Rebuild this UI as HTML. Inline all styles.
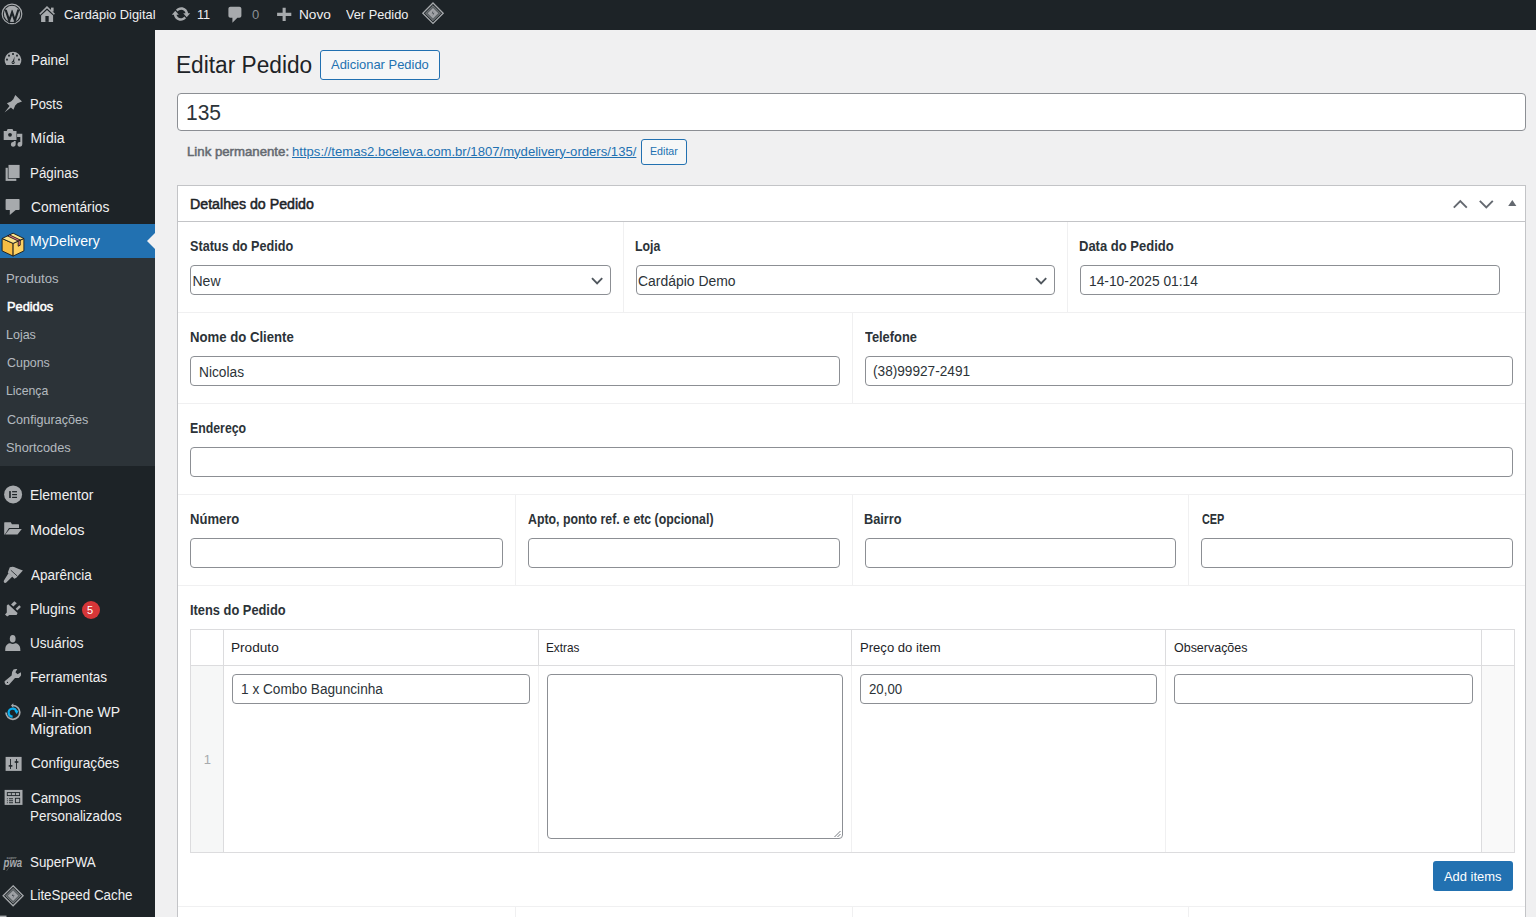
<!DOCTYPE html>
<html><head><meta charset="utf-8"><title>Editar Pedido</title>
<style>
html,body{margin:0;padding:0}
body{width:1536px;height:917px;overflow:hidden;position:relative;background:#f0f0f1;font-family:"Liberation Sans",sans-serif}
.t{position:absolute;white-space:nowrap;transform-origin:0 0}
.r{position:absolute}
svg{position:absolute}
</style></head><body>
<div class="r" style="left:0px;top:0px;width:1536px;height:30px;background:#1d2327"></div>
<div class="r" style="left:0px;top:30px;width:155px;height:887px;background:#1d2327"></div>
<div class="r" style="left:0px;top:258px;width:155px;height:208px;background:#2c3338"></div>
<div class="r" style="left:0px;top:224px;width:155px;height:34px;background:#2271b1"></div>
<div class="r" style="left:147px;top:233px;width:0;height:0;border-top:8px solid transparent;border-bottom:8px solid transparent;border-right:8px solid #f0f0f1"></div>
<div class="r" style="left:81.5px;top:600.5px;width:18px;height:18px;border-radius:9px;background:#d63638"></div>
<div class="r" style="left:320px;top:50px;width:120px;height:30px;border:1px solid #2271b1;border-radius:3px;background:#f6f7f7;box-sizing:border-box"></div>
<div class="r" style="left:177px;top:93px;width:1349px;height:38px;border:1px solid #8c8f94;border-radius:4px;background:#fff;box-sizing:border-box"></div>
<div class="r" style="left:641px;top:139px;width:46px;height:26px;border:1px solid #2271b1;border-radius:3px;background:#f6f7f7;box-sizing:border-box"></div>
<div class="r" style="left:177px;top:185px;width:1349px;height:732px;border:1px solid #c3c4c7;border-bottom:none;background:#fff;box-sizing:border-box"></div>
<div class="r" style="left:178px;top:221px;width:1347px;height:1px;background:#c3c4c7"></div>
<div class="r" style="left:178px;top:312px;width:1347px;height:1px;background:#f0f0f1"></div>
<div class="r" style="left:178px;top:403px;width:1347px;height:1px;background:#f0f0f1"></div>
<div class="r" style="left:178px;top:494px;width:1347px;height:1px;background:#f0f0f1"></div>
<div class="r" style="left:178px;top:585px;width:1347px;height:1px;background:#f0f0f1"></div>
<div class="r" style="left:178px;top:906px;width:1347px;height:1px;background:#f0f0f1"></div>
<div class="r" style="left:623px;top:222px;width:1px;height:90px;background:#f0f0f1"></div>
<div class="r" style="left:1067px;top:222px;width:1px;height:90px;background:#f0f0f1"></div>
<div class="r" style="left:852px;top:313px;width:1px;height:90px;background:#f0f0f1"></div>
<div class="r" style="left:515px;top:495px;width:1px;height:90px;background:#f0f0f1"></div>
<div class="r" style="left:515px;top:907px;width:1px;height:10px;background:#f0f0f1"></div>
<div class="r" style="left:852px;top:495px;width:1px;height:90px;background:#f0f0f1"></div>
<div class="r" style="left:852px;top:907px;width:1px;height:10px;background:#f0f0f1"></div>
<div class="r" style="left:1188px;top:495px;width:1px;height:90px;background:#f0f0f1"></div>
<div class="r" style="left:1188px;top:907px;width:1px;height:10px;background:#f0f0f1"></div>
<div class="r" style="left:190px;top:265px;width:421px;height:30px;border:1px solid #8c8f94;border-radius:4px;background:#fff;box-sizing:border-box"></div>
<div class="r" style="left:636px;top:265px;width:419px;height:30px;border:1px solid #8c8f94;border-radius:4px;background:#fff;box-sizing:border-box"></div>
<div class="r" style="left:1080px;top:265px;width:420px;height:30px;border:1px solid #8c8f94;border-radius:4px;background:#fff;box-sizing:border-box"></div>
<div class="r" style="left:190px;top:356px;width:650px;height:30px;border:1px solid #8c8f94;border-radius:4px;background:#fff;box-sizing:border-box"></div>
<div class="r" style="left:865px;top:356px;width:648px;height:30px;border:1px solid #8c8f94;border-radius:4px;background:#fff;box-sizing:border-box"></div>
<div class="r" style="left:190px;top:447px;width:1323px;height:30px;border:1px solid #8c8f94;border-radius:4px;background:#fff;box-sizing:border-box"></div>
<div class="r" style="left:190px;top:538px;width:313px;height:30px;border:1px solid #8c8f94;border-radius:4px;background:#fff;box-sizing:border-box"></div>
<div class="r" style="left:528px;top:538px;width:312px;height:30px;border:1px solid #8c8f94;border-radius:4px;background:#fff;box-sizing:border-box"></div>
<div class="r" style="left:865px;top:538px;width:311px;height:30px;border:1px solid #8c8f94;border-radius:4px;background:#fff;box-sizing:border-box"></div>
<div class="r" style="left:1201px;top:538px;width:312px;height:30px;border:1px solid #8c8f94;border-radius:4px;background:#fff;box-sizing:border-box"></div>
<div class="r" style="left:190px;top:629px;width:1325px;height:224px;border:1px solid #dcdcde;box-sizing:border-box;background:#fff"></div>
<div class="r" style="left:191px;top:666px;width:32px;height:186px;background:#f6f7f7"></div>
<div class="r" style="left:1482px;top:666px;width:32px;height:186px;background:#f9f9f9"></div>
<div class="r" style="left:191px;top:665px;width:1323px;height:1px;background:#dcdcde"></div>
<div class="r" style="left:223px;top:630px;width:1px;height:35px;background:#dcdcde"></div>
<div class="r" style="left:223px;top:666px;width:1px;height:186px;background:#dcdcde"></div>
<div class="r" style="left:538px;top:630px;width:1px;height:35px;background:#dcdcde"></div>
<div class="r" style="left:538px;top:666px;width:1px;height:186px;background:#f0f0f1"></div>
<div class="r" style="left:851px;top:630px;width:1px;height:35px;background:#dcdcde"></div>
<div class="r" style="left:851px;top:666px;width:1px;height:186px;background:#f0f0f1"></div>
<div class="r" style="left:1165px;top:630px;width:1px;height:35px;background:#dcdcde"></div>
<div class="r" style="left:1165px;top:666px;width:1px;height:186px;background:#f0f0f1"></div>
<div class="r" style="left:1481px;top:630px;width:1px;height:35px;background:#dcdcde"></div>
<div class="r" style="left:1481px;top:666px;width:1px;height:186px;background:#dcdcde"></div>
<div class="r" style="left:232px;top:674px;width:298px;height:30px;border:1px solid #8c8f94;border-radius:4px;background:#fff;box-sizing:border-box"></div>
<div class="r" style="left:547px;top:674px;width:296px;height:165px;border:1px solid #8c8f94;border-radius:4px;background:#fff;box-sizing:border-box"></div>
<div class="r" style="left:860px;top:674px;width:297px;height:30px;border:1px solid #8c8f94;border-radius:4px;background:#fff;box-sizing:border-box"></div>
<div class="r" style="left:1174px;top:674px;width:299px;height:30px;border:1px solid #8c8f94;border-radius:4px;background:#fff;box-sizing:border-box"></div>
<div class="r" style="left:1433px;top:861px;width:80px;height:30px;background:#2271b1;border-radius:3px"></div>
<div class="t" style="left:63.70px;top:7.75px;font-size:13px;line-height:13px;color:#f0f0f1;font-weight:normal;transform:scaleX(0.9891);">Cardápio Digital</div>
<div class="t" style="left:196.72px;top:7.75px;font-size:13px;line-height:13px;color:#f0f0f1;font-weight:normal;transform:scaleX(0.9750);">11</div>
<div class="t" style="left:252.00px;top:7.75px;font-size:13px;line-height:13px;color:#8c8f94;font-weight:normal;">0</div>
<div class="t" style="left:299.45px;top:7.75px;font-size:13px;line-height:13px;color:#f0f0f1;font-weight:normal;transform:scaleX(1.0517);">Novo</div>
<div class="t" style="left:345.80px;top:7.75px;font-size:13px;line-height:13px;color:#f0f0f1;font-weight:normal;transform:scaleX(0.9794);">Ver Pedido</div>
<div class="t" style="left:30.74px;top:52.75px;font-size:14px;line-height:14px;color:#f0f0f1;font-weight:normal;transform:scaleX(0.9649);">Painel</div>
<div class="t" style="left:30.47px;top:97.35px;font-size:14px;line-height:14px;color:#f0f0f1;font-weight:normal;transform:scaleX(0.9265);">Posts</div>
<div class="t" style="left:30.40px;top:131.25px;font-size:14px;line-height:14px;color:#f0f0f1;font-weight:normal;">Mídia</div>
<div class="t" style="left:30.44px;top:165.65px;font-size:14px;line-height:14px;color:#f0f0f1;font-weight:normal;transform:scaleX(0.9551);">Páginas</div>
<div class="t" style="left:31.40px;top:200.05px;font-size:14px;line-height:14px;color:#f0f0f1;font-weight:normal;transform:scaleX(0.9873);">Comentários</div>
<div class="t" style="left:30.39px;top:234.05px;font-size:14px;line-height:14px;color:#ffffff;font-weight:normal;transform:scaleX(1.0088);">MyDelivery</div>
<div class="t" style="left:6.39px;top:272.00px;font-size:13px;line-height:13px;color:rgba(240,246,252,.7);font-weight:normal;transform:scaleX(1.0098);">Produtos</div>
<div class="t" style="left:7.40px;top:300.10px;font-size:13px;line-height:13px;color:#ffffff;font-weight:normal;-webkit-text-stroke:0.5px currentColor;transform:scaleX(0.9830);">Pedidos</div>
<div class="t" style="left:6.44px;top:328.20px;font-size:13px;line-height:13px;color:rgba(240,246,252,.7);font-weight:normal;transform:scaleX(0.9600);">Lojas</div>
<div class="t" style="left:7.40px;top:356.30px;font-size:13px;line-height:13px;color:rgba(240,246,252,.7);font-weight:normal;transform:scaleX(0.9556);">Cupons</div>
<div class="t" style="left:6.46px;top:384.40px;font-size:13px;line-height:13px;color:rgba(240,246,252,.7);font-weight:normal;transform:scaleX(0.9432);">Licença</div>
<div class="t" style="left:7.40px;top:412.50px;font-size:13px;line-height:13px;color:rgba(240,246,252,.7);font-weight:normal;transform:scaleX(0.9702);">Configurações</div>
<div class="t" style="left:6.42px;top:440.60px;font-size:13px;line-height:13px;color:rgba(240,246,252,.7);font-weight:normal;transform:scaleX(0.9831);">Shortcodes</div>
<div class="t" style="left:30.41px;top:488.15px;font-size:14px;line-height:14px;color:#f0f0f1;font-weight:normal;transform:scaleX(0.9921);">Elementor</div>
<div class="t" style="left:30.37px;top:522.75px;font-size:14px;line-height:14px;color:#f0f0f1;font-weight:normal;transform:scaleX(1.0308);">Modelos</div>
<div class="t" style="left:31.40px;top:568.15px;font-size:14px;line-height:14px;color:#f0f0f1;font-weight:normal;transform:scaleX(0.9651);">Aparência</div>
<div class="t" style="left:30.41px;top:601.95px;font-size:14px;line-height:14px;color:#f0f0f1;font-weight:normal;transform:scaleX(0.9889);">Plugins</div>
<div class="t" style="left:30.43px;top:636.15px;font-size:14px;line-height:14px;color:#f0f0f1;font-weight:normal;transform:scaleX(0.9704);">Usuários</div>
<div class="t" style="left:30.43px;top:670.15px;font-size:14px;line-height:14px;color:#f0f0f1;font-weight:normal;transform:scaleX(0.9705);">Ferramentas</div>
<div class="t" style="left:31.40px;top:704.95px;font-size:14px;line-height:14px;color:#f0f0f1;font-weight:normal;">All-in-One WP</div>
<div class="t" style="left:30.33px;top:722.35px;font-size:14px;line-height:14px;color:#f0f0f1;font-weight:normal;transform:scaleX(1.0714);">Migration</div>
<div class="t" style="left:31.40px;top:756.15px;font-size:14px;line-height:14px;color:#f0f0f1;font-weight:normal;transform:scaleX(0.9767);">Configurações</div>
<div class="t" style="left:31.40px;top:790.85px;font-size:14px;line-height:14px;color:#f0f0f1;font-weight:normal;transform:scaleX(0.9558);">Campos</div>
<div class="t" style="left:30.44px;top:808.55px;font-size:14px;line-height:14px;color:#f0f0f1;font-weight:normal;transform:scaleX(0.9568);">Personalizados</div>
<div class="t" style="left:30.44px;top:854.55px;font-size:14px;line-height:14px;color:#f0f0f1;font-weight:normal;transform:scaleX(0.9559);">SuperPWA</div>
<div class="t" style="left:30.45px;top:888.45px;font-size:14px;line-height:14px;color:#f0f0f1;font-weight:normal;transform:scaleX(0.9547);">LiteSpeed Cache</div>
<div class="t" style="left:86.90px;top:604.69px;font-size:11px;line-height:11px;color:#ffffff;font-weight:normal;">5</div>
<div class="t" style="left:176.23px;top:53.93px;font-size:23px;line-height:23px;color:#1d2327;font-weight:normal;transform:scaleX(0.9859);">Editar Pedido</div>
<div class="t" style="left:331.30px;top:58.20px;font-size:13px;line-height:13px;color:#2271b1;font-weight:normal;transform:scaleX(0.9949);">Adicionar Pedido</div>
<div class="t" style="left:186.35px;top:101.98px;font-size:22px;line-height:22px;color:#2c3338;font-weight:normal;transform:scaleX(0.9543);">135</div>
<div class="t" style="left:187.40px;top:144.70px;font-size:13px;line-height:13px;color:#646970;font-weight:normal;-webkit-text-stroke:0.5px currentColor;transform:scaleX(1.0160);">Link permanente:</div>
<div class="t" style="left:292.39px;top:144.70px;font-size:13px;line-height:13px;color:#2271b1;font-weight:normal;transform:scaleX(1.0076);text-decoration:underline">https://temas2.bceleva.com.br/1807/mydelivery-orders/135/</div>
<div class="t" style="left:649.53px;top:146.19px;font-size:11px;line-height:11px;color:#2271b1;font-weight:normal;transform:scaleX(0.9679);">Editar</div>
<div class="t" style="left:189.69px;top:197.05px;font-size:14px;line-height:14px;color:#1d2327;font-weight:normal;-webkit-text-stroke:0.5px currentColor;transform:scaleX(1.0140);">Detalhes do Pedido</div>
<div class="t" style="left:190.00px;top:239.15px;font-size:14px;line-height:14px;color:#2c3338;font-weight:bold;transform:scaleX(0.9026);">Status do Pedido</div>
<div class="t" style="left:634.92px;top:239.15px;font-size:14px;line-height:14px;color:#2c3338;font-weight:bold;transform:scaleX(0.8786);">Loja</div>
<div class="t" style="left:1079.47px;top:239.15px;font-size:14px;line-height:14px;color:#2c3338;font-weight:bold;transform:scaleX(0.9287);">Data do Pedido</div>
<div class="t" style="left:192.50px;top:274.15px;font-size:14px;line-height:14px;color:#2c3338;font-weight:normal;">New</div>
<div class="t" style="left:637.90px;top:274.35px;font-size:14px;line-height:14px;color:#2c3338;font-weight:normal;transform:scaleX(0.9949);">Cardápio Demo</div>
<div class="t" style="left:1088.61px;top:273.55px;font-size:14px;line-height:14px;color:#2c3338;font-weight:normal;transform:scaleX(0.9855);">14-10-2025 01:14</div>
<div class="t" style="left:189.66px;top:330.15px;font-size:14px;line-height:14px;color:#2c3338;font-weight:bold;transform:scaleX(0.9394);">Nome do Cliente</div>
<div class="t" style="left:865.00px;top:330.15px;font-size:14px;line-height:14px;color:#2c3338;font-weight:bold;transform:scaleX(0.9179);">Telefone</div>
<div class="t" style="left:198.72px;top:364.85px;font-size:14px;line-height:14px;color:#2c3338;font-weight:normal;transform:scaleX(0.9800);">Nicolas</div>
<div class="t" style="left:872.83px;top:364.45px;font-size:14px;line-height:14px;color:#2c3338;font-weight:normal;transform:scaleX(0.9745);">(38)99927-2491</div>
<div class="t" style="left:189.72px;top:421.35px;font-size:14px;line-height:14px;color:#2c3338;font-weight:bold;transform:scaleX(0.8794);">Endereço</div>
<div class="t" style="left:189.97px;top:512.15px;font-size:14px;line-height:14px;color:#2c3338;font-weight:bold;transform:scaleX(0.9327);">Número</div>
<div class="t" style="left:528.20px;top:512.15px;font-size:14px;line-height:14px;color:#2c3338;font-weight:bold;transform:scaleX(0.8800);">Apto, ponto ref. e etc (opcional)</div>
<div class="t" style="left:864.19px;top:512.15px;font-size:14px;line-height:14px;color:#2c3338;font-weight:bold;transform:scaleX(0.9100);">Bairro</div>
<div class="t" style="left:1201.70px;top:512.15px;font-size:14px;line-height:14px;color:#2c3338;font-weight:bold;transform:scaleX(0.7759);">CEP</div>
<div class="t" style="left:189.58px;top:602.65px;font-size:14px;line-height:14px;color:#2c3338;font-weight:bold;transform:scaleX(0.9175);">Itens do Pedido</div>
<div class="t" style="left:231.25px;top:640.70px;font-size:13px;line-height:13px;color:#1d2327;font-weight:normal;transform:scaleX(1.0477);">Produto</div>
<div class="t" style="left:546.19px;top:640.70px;font-size:13px;line-height:13px;color:#1d2327;font-weight:normal;transform:scaleX(0.9056);">Extras</div>
<div class="t" style="left:859.69px;top:640.70px;font-size:13px;line-height:13px;color:#1d2327;font-weight:normal;transform:scaleX(1.0063);">Preço do item</div>
<div class="t" style="left:1174.00px;top:640.70px;font-size:13px;line-height:13px;color:#1d2327;font-weight:normal;transform:scaleX(0.9592);">Observações</div>
<div class="t" style="left:203.70px;top:753.00px;font-size:13px;line-height:13px;color:#a7aaad;font-weight:normal;">1</div>
<div class="t" style="left:240.92px;top:682.15px;font-size:14px;line-height:14px;color:#2c3338;font-weight:normal;transform:scaleX(0.9752);">1 x Combo Baguncinha</div>
<div class="t" style="left:869.30px;top:682.15px;font-size:14px;line-height:14px;color:#2c3338;font-weight:normal;transform:scaleX(0.9457);">20,00</div>
<div class="t" style="left:1444.40px;top:870.00px;font-size:13px;line-height:13px;color:#ffffff;font-weight:normal;transform:scaleX(0.9931);">Add items</div>
<svg width="1536" height="917" viewBox="0 0 1536 917" style="position:absolute;left:0;top:0;pointer-events:none"><circle cx="12" cy="13.9" r="9.8" fill="none" stroke="#a7aaad" stroke-width="1.2"/><circle cx="12" cy="13.9" r="8.1" fill="#a7aaad"/><path d="M5.6,9.6 L9.2,20.6 L12.1,12.2 L14.9,20.6 L18.4,9.6" fill="none" stroke="#1d2327" stroke-width="2.1" stroke-linejoin="miter"/><path d="M6.2,9.2 H10.3 M11.6,9.2 H15.2" stroke="#a7aaad" stroke-width="1.2"/><path d="M39.8,14.3 L47,7.1 L54.4,14.3" fill="none" stroke="#a7aaad" stroke-width="1.6"/><rect x="51" y="7.6" width="2.6" height="4" fill="#a7aaad"/><path d="M41.1,21.9 V15.6 L47,9.9 L53.1,15.6 V21.9 Z" fill="#a7aaad"/><rect x="45.4" y="16" width="3.3" height="5.9" fill="#1d2327"/><g transform="translate(171,4)"><path fill="#a7aaad" d="M10.2 3.28c3.53 0 6.43 2.61 6.92 6h2.08l-3.5 4-3.5-4h2.32c-.45-1.97-2.21-3.45-4.32-3.45-1.45 0-2.73.71-3.540 1.78L4.95 5.66C6.23 4.2 8.11 3.28 10.2 3.28zm-.4 13.44c-3.52 0-6.43-2.61-6.920-6H.8l3.5-4c1.17 1.33 2.33 2.670 3.5 4H5.48c.45 1.97 2.21 3.45 4.32 3.45 1.45 0 2.73-.71 3.54-1.78l1.71 1.950c-1.28 1.46-3.15 2.38-5.25 2.38z"/></g><g transform="translate(225.4,4.8)"><path fill="#a7aaad" d="M5 2h9c1.1 0 2 .9 2 2v7c0 1.1-.9 2-2 2h-2l-5 5v-5H5c-1.1 0-2-.9-2-2V4c0-1.1.9-2 2-2z"/></g><path fill="#a7aaad" d="M282.6,7.7 h3.1 v5.1 h5.6 v3.1 h-5.6 v5.1 h-3.1 v-5.1 h-5.5 v-3.1 h5.5 z"/><polygon points="433,3.0 443.2,13.2 433,23.4 422.8,13.2" fill="none" stroke="#a7aaad" stroke-width="1.3"/><polygon points="433,5.652 440.548,13.2 433,20.747999999999998 425.452,13.2" fill="#a7aaad" fill-opacity="0.45" stroke="#a7aaad" stroke-width="0.8" stroke-opacity="0.7"/><polygon points="433,7.896 438.304,13.2 433,18.503999999999998 427.696,13.2" fill="#a7aaad" opacity="0.9"/><path d="M433.3,10.6 L431.7,13.5 L433.4,13.299999999999999 L432.5,15.899999999999999 L434.4,12.7 L432.8,12.899999999999999 Z" fill="#3c434a"/><path d="M6.2,65.1 A8.4,8.4 0 1 1 19.8,65.1 Z" fill="#a7aaad"/><rect x="12.1" y="53.1" width="1.8" height="1.8" fill="#1d2327"/><rect x="8.1" y="54.7" width="1.8" height="1.8" fill="#1d2327"/><rect x="16.1" y="54.7" width="1.8" height="1.8" fill="#1d2327"/><rect x="6.1" y="58.7" width="1.8" height="1.8" fill="#1d2327"/><rect x="18.1" y="58.7" width="1.8" height="1.8" fill="#1d2327"/><path d="M12.2,62.4 L14.6,56.6 L14,62.6 Z" fill="#1d2327"/><circle cx="13.1" cy="62.4" r="1.5" fill="#1d2327"/><circle cx="13.1" cy="62.4" r="0.6" fill="#a7aaad"/><path fill="#a7aaad" d="M15.3,94.9 L22,101.5 L17.4,103.3 L15.2,105.6 L13.4,109.8 L10.9,107.5 L4.5,112.6 L9.5,106.1 L6.9,103.2 L11,101.4 L13.3,99.3 Z"/><path fill="#a7aaad" d="M3.7,131 H6.7 L7.6,129 H12.5 L13.4,131 H16.5 V139.9 H3.7 Z"/><circle cx="10" cy="134.8" r="1.9" fill="#1d2327"/><path fill="#a7aaad" d="M17.1,133.8 H22.3 V144.3 A2.4,2.4 0 1 1 20.3,142 V137 H17.1 Z"/><path fill="#a7aaad" d="M13.7,140.9 H15.7 V144.3 A2.4,2.4 0 1 1 13.7,142 Z"/><rect x="5.6" y="167.8" width="10.7" height="13.1" fill="#a7aaad"/><rect x="7.8" y="164.2" width="12.4" height="14.5" fill="#1d2327"/><rect x="8.5" y="164.9" width="11.1" height="13.1" fill="#a7aaad"/><path fill="#a7aaad" d="M6.4,198.9 H18.8 Q19.6,198.9 19.6,199.7 V209.2 Q19.6,210 18.8,210 H15.7 L9.8,214.9 V210 H6.4 Q5.6,210 5.6,209.2 V199.7 Q5.6,198.9 6.4,198.9 Z"/><g stroke="#1a1a1a" stroke-width="0.9" stroke-linejoin="round"><polygon points="2.1,238.5 13.1,243.4 13.1,256.1 2.1,250.9" fill="#f7bd45"/><polygon points="13.1,243.4 23.9,238.5 23.9,250.9 13.1,256.1" fill="#fbd062"/><polygon points="2.1,238.5 13.1,233.2 23.9,238.5 13.1,243.4" fill="#fde48a"/><polygon points="7.6,235.9 9.6,234.9 20.2,240 18.2,241" fill="#f27b88"/><polygon points="18.2,241 20.2,240 20.2,245.2 18.2,246.2" fill="#f27b88"/></g><circle cx="13.1" cy="494.4" r="9" fill="#a7aaad"/><rect x="9.2" y="491.1" width="1.6" height="6.9" fill="#1d2327"/><rect x="12.1" y="491.1" width="4.9" height="1.2" fill="#1d2327"/><rect x="12.1" y="494" width="4.9" height="1.2" fill="#1d2327"/><rect x="12.1" y="496.8" width="4.9" height="1.2" fill="#1d2327"/><path fill="#a7aaad" d="M4.2,534.6 V522.8 Q4.2,522.2 4.8,522.2 H10.8 L11.9,524.3 H18.4 Q19,524.3 19,524.9 V528 H9 L4.8,534.6 Z"/><path fill="#a7aaad" d="M5.2,534.6 L9.6,529 H21.8 L17.5,534.6 Z"/><path fill="#a7aaad" d="M9.8,567.3 Q12,566.5 14,566.9 Q18,568.5 22.9,570.5 L16.3,577.7 L14.4,578.7 L7.8,572.5 Z"/><path d="M10.8,570.2 L17.3,576.1" stroke="#1d2327" stroke-width="0.8"/><path fill="#a7aaad" d="M8.6,572.9 L12.4,576.6 L6.3,582.6 Q5.2,583.5 4.2,582.5 Q3.2,581.4 4.1,580.3 Z"/><path fill="#a7aaad" d="M8.2,604.3 L17.6,613.1 L16.6,614.9 L9.4,614.9 L7.2,616.6 L5,614.6 L6.8,612.6 L6.8,605.4 Z"/><path fill="#a7aaad" d="M11,604.6 L14.3,601.2 L16.8,603.2 L13.4,606.6 Z"/><path fill="#a7aaad" d="M15.7,608.8 L19.3,605.2 L20.9,606.9 L17.3,610.5 Z"/><ellipse cx="12.7" cy="638.7" rx="2.9" ry="3.8" fill="#a7aaad"/><path fill="#a7aaad" d="M5.2,650.9 Q4.8,645.5 8.5,643.6 Q9.5,643.1 10.2,643.3 Q12.7,644.8 15.2,643.3 Q16,643.1 17,643.6 Q20.7,645.5 20.4,650.9 Z"/><path fill="#a7aaad" d="M13.5,669.5 Q14.8,668.6 17.3,669 L15.4,672.2 L17.6,674.3 L20.9,672.2 Q21.3,675 20.7,676 L18.8,677.9 L15,678.1 L9.2,684.4 Q7.5,685.5 5.6,684.4 Q4.3,683 4.6,681.3 L11.6,675.5 L12.1,671.9 Z"/><circle cx="7.5" cy="682.4" r="0.6" fill="#1d2327"/><path d="M6,712.6 A6.9,6.9 0 1 0 12.9,705.5" fill="none" stroke="#a7aaad" stroke-width="1.7"/><path fill="#a7aaad" d="M11,705.6 L13.3,703.2 L13.3,708 Z"/><path d="M12.6,716.6 A4,4 0 1 1 16.4,711.2" fill="none" stroke="#0aaeef" stroke-width="2.2"/><path fill="#0aaeef" d="M14.6,711 L18.6,710.6 L16.8,714.2 Z"/><rect x="5.6" y="756.9" width="16" height="14" fill="#a7aaad"/><rect x="10.1" y="759" width="0.9" height="10" fill="#1d2327"/><rect x="8.7" y="765.1" width="3.7" height="1.6" fill="#1d2327"/><rect x="16.1" y="759" width="0.9" height="10" fill="#1d2327"/><rect x="14.7" y="761.2" width="3.7" height="1.6" fill="#1d2327"/><rect x="4.6" y="789.9" width="17.9" height="15" fill="#a7aaad"/><rect x="7.3" y="792.6" width="12.3" height="3" fill="none" stroke="#1d2327" stroke-width="0.9"/><path d="M11.4,792.6 V795.6 M15.5,792.6 V795.6" stroke="#1d2327" stroke-width="0.8"/><rect x="6.9" y="798.3" width="0.9" height="0.9" fill="#1d2327"/><rect x="9" y="798.3" width="4" height="0.9" fill="#1d2327"/><rect x="6.9" y="800.3" width="0.9" height="0.9" fill="#1d2327"/><rect x="9" y="800.3" width="4" height="0.9" fill="#1d2327"/><rect x="6.9" y="802.3" width="0.9" height="0.9" fill="#1d2327"/><rect x="9" y="802.3" width="4" height="0.9" fill="#1d2327"/><rect x="15.4" y="798.3" width="4.3" height="4.4" fill="none" stroke="#1d2327" stroke-width="0.9"/><text x="3.6" y="867" font-family="Liberation Sans" font-style="italic" font-weight="bold" font-size="12" fill="#a7aaad" textLength="18.6" lengthAdjust="spacingAndGlyphs">pwa</text><text x="6.5" y="858.5" font-family="Liberation Sans" font-style="italic" font-weight="bold" font-size="3.6" fill="#a7aaad" opacity="0.8">super</text><path d="M6.5,871 L9.8,866" stroke="#a7aaad" stroke-width="0.5" opacity="0.6"/><rect x="0" y="915.6" width="6.5" height="1.4" fill="#a7aaad"/><polygon points="13.1,885.8 23.1,895.8 13.1,905.8 3.0999999999999996,895.8" fill="none" stroke="#a7aaad" stroke-width="1.3"/><polygon points="13.1,888.4 20.5,895.8 13.1,903.1999999999999 5.699999999999999,895.8" fill="#a7aaad" fill-opacity="0.45" stroke="#a7aaad" stroke-width="0.8" stroke-opacity="0.7"/><polygon points="13.1,890.5999999999999 18.3,895.8 13.1,901.0 7.8999999999999995,895.8" fill="#a7aaad" opacity="0.9"/><path d="M13.4,893.1999999999999 L11.799999999999999,896.0999999999999 L13.5,895.9 L12.6,898.5 L14.5,895.3 L12.9,895.5 Z" fill="#3c434a"/><path d="M1453.8,207.6 L1460.3,201 L1466.8,207.6" fill="none" stroke="#646970" stroke-width="1.9"/><path d="M1479.8,200.8 L1486.3,207.4 L1492.8,200.8" fill="none" stroke="#646970" stroke-width="1.9"/><path d="M1508.2,206 L1512.3,200 L1516.4,206 Z" fill="#646970"/><path d="M592,278.2 L597.1,283.3 L602.2,278.2" fill="none" stroke="#50575e" stroke-width="1.9"/><path d="M1036,278.2 L1041.1,283.3 L1046.2,278.2" fill="none" stroke="#50575e" stroke-width="1.9"/><path d="M834.5,837 L840.5,831 M837.5,837 L840.5,834" stroke="#50575e" stroke-width="0.8"/></svg>

</body></html>
